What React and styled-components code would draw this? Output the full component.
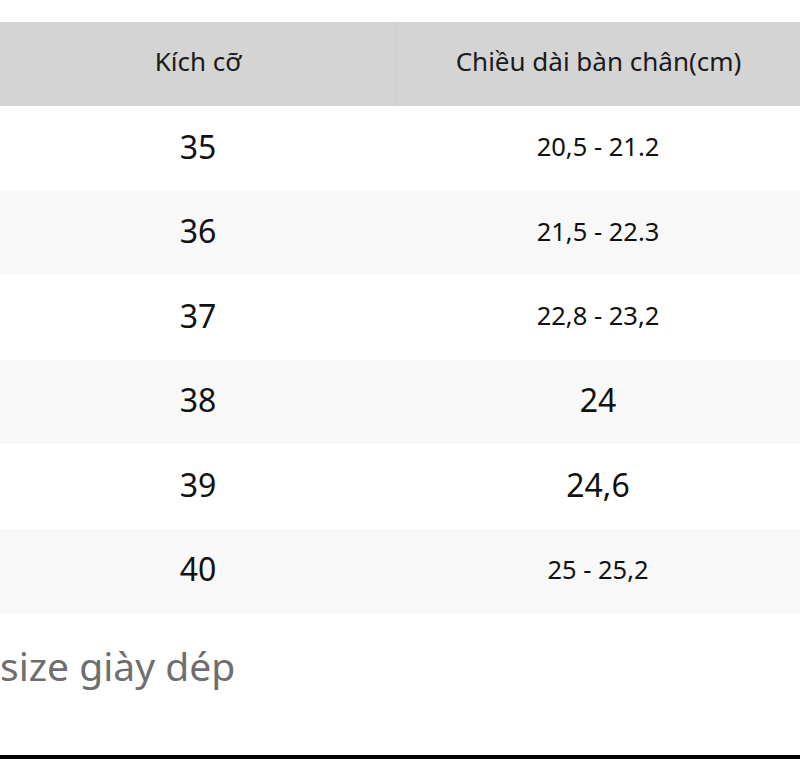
import styled, { createGlobalStyle } from 'styled-components';

const rows = [
    { size: '35', length: '20,5 - 21.2' },
    { size: '36', length: '21,5 - 22.3' },
    { size: '37', length: '22,8 - 23,2' },
    { size: '38', length: '24', big: true },
    { size: '39', length: '24,6', big: true },
    { size: '40', length: '25 - 25,2' },
];

export default function App() {
    return (
        <Page>
            <GlobalStyle />
            <Table>
                <HeadRow>
                    <HeadCell>Kích cỡ</HeadCell>
                    <HeadCell>Chiều dài bàn chân(cm)</HeadCell>
                </HeadRow>
                {rows.map((r, i) => (
                    <Row key={r.size} $striped={i % 2 === 1}>
                        <Cell $big>{r.size}</Cell>
                        <Cell $big={r.big}>{r.length}</Cell>
                    </Row>
                ))}
            </Table>
            <Caption>size giày dép</Caption>
            <BottomBar />
        </Page>
    );
}

const GlobalStyle = createGlobalStyle`
    body {
        margin: 0;
        background: #fff;
        font-family: "Noto Sans", "Open Sans", sans-serif;
    }
`;

const Page = styled.div`
    display: flex;
    flex-direction: column;
    width: 800px;
    height: 759px;
    padding-top: 22px;
    box-sizing: border-box;
`;

const Table = styled.div`
    display: flex;
    flex-direction: column;
`;

const HeadRow = styled.div`
    display: grid;
    grid-template-columns: 396px 1fr;
    height: 84px;
    background: #d4d4d4;
`;

const HeadCell = styled.div`
    display: flex;
    align-items: center;
    justify-content: center;
    padding-bottom: 7px;
    font-size: 26px;
    color: #1a1a1a;
    & + & {
        border-left: 1px solid #cccccc;
    }
`;

const Row = styled.div`
    display: grid;
    grid-template-columns: 396px 1fr;
    height: 84.5px;
    background: ${p => (p.$striped ? '#f8f8f8' : '#ffffff')};
`;

const Cell = styled.div`
    display: flex;
    align-items: center;
    justify-content: center;
    padding-bottom: 4px;
    font-size: ${p => (p.$big ? '32px' : '25.5px')};
    color: #111;
`;

const Caption = styled.div`
    flex: 1;
    padding-top: 30px;
    font-size: 39px;
    color: #6e6e6e;
    line-height: 1.2;
`;

const BottomBar = styled.div`
    height: 4px;
    background: #000;
`;
